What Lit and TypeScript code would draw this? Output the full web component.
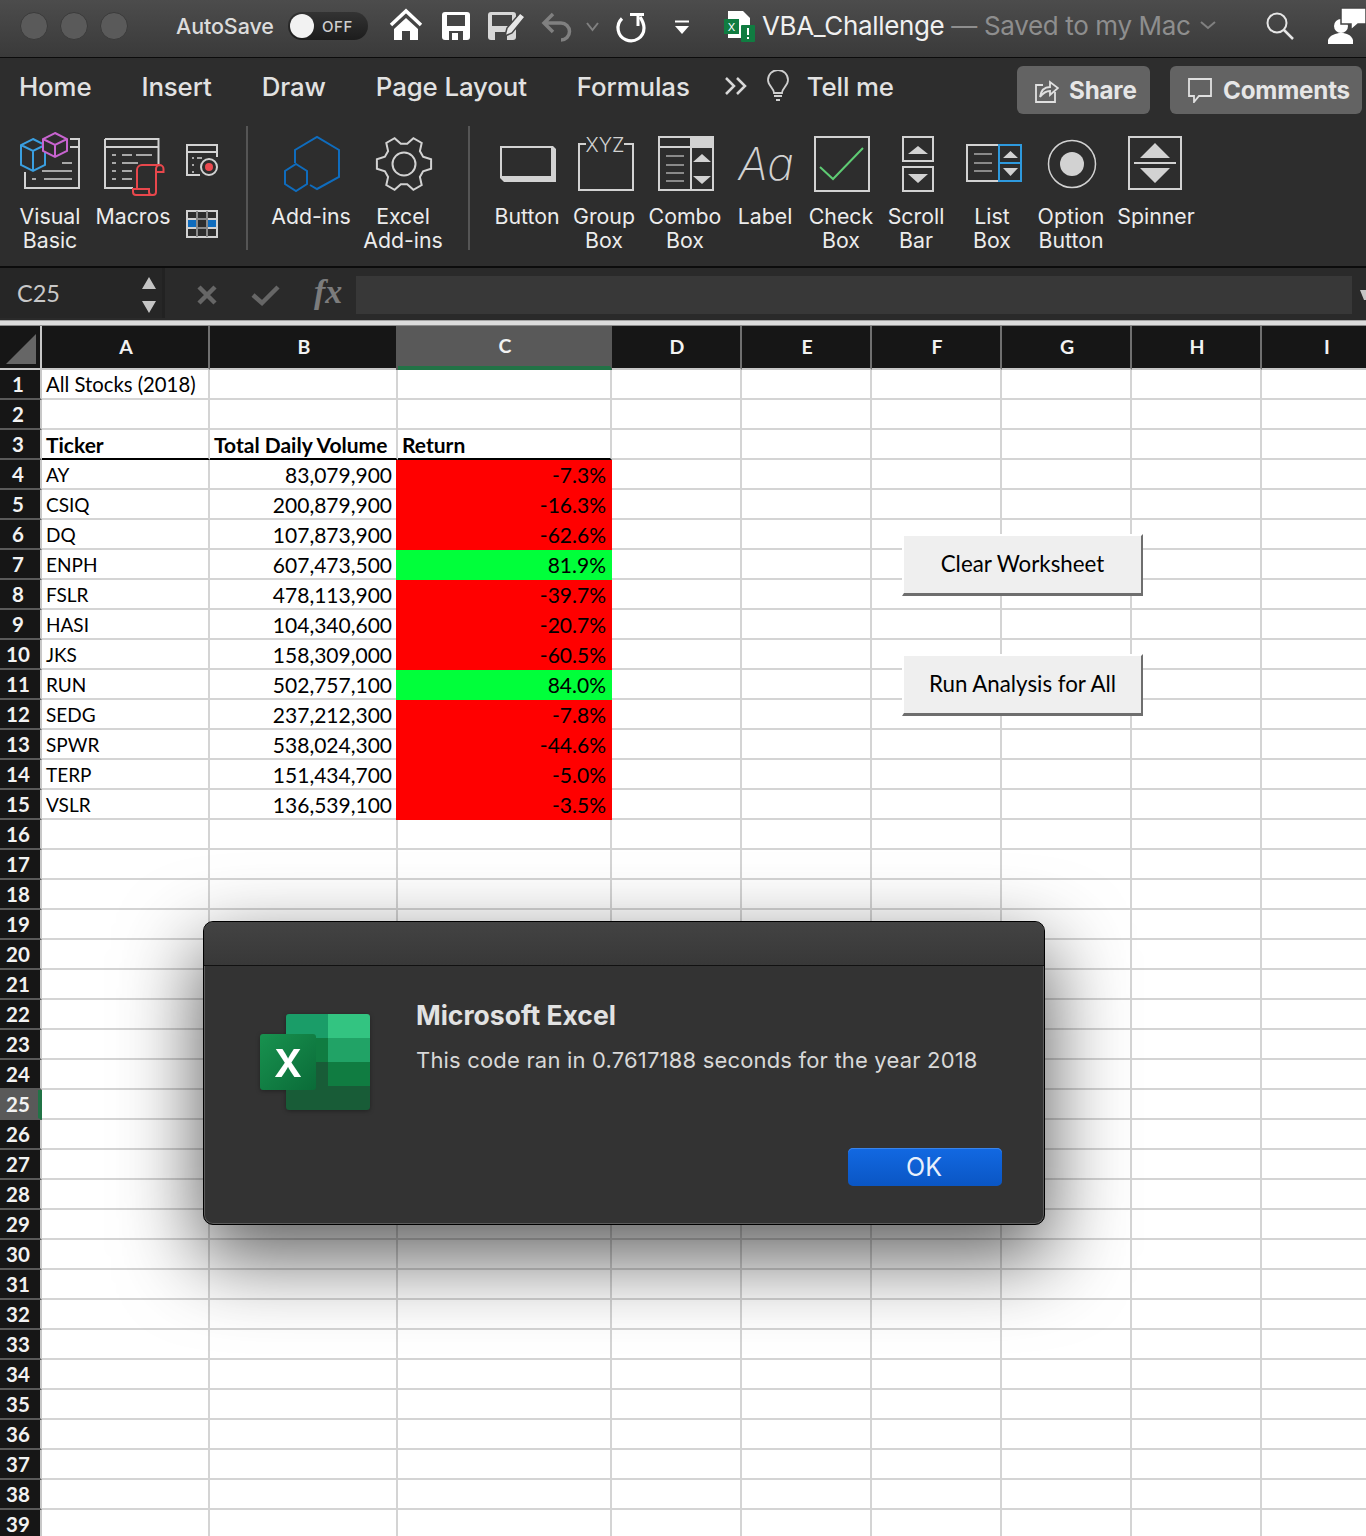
import { LitElement, html, css, svg, TemplateResult } from "lit";
import { customElement } from "lit/decorators.js";

interface RibbonItem {
  label: string[];
  width: number;
  box: [number, number];
  icon: TemplateResult;
}

interface StockRow {
  ticker: string;
  volume: string;
  change: string;
}

const STOCKS: StockRow[] = [
  { ticker: "AY", volume: "83,079,900", change: "-7.3%" },
  { ticker: "CSIQ", volume: "200,879,900", change: "-16.3%" },
  { ticker: "DQ", volume: "107,873,900", change: "-62.6%" },
  { ticker: "ENPH", volume: "607,473,500", change: "81.9%" },
  { ticker: "FSLR", volume: "478,113,900", change: "-39.7%" },
  { ticker: "HASI", volume: "104,340,600", change: "-20.7%" },
  { ticker: "JKS", volume: "158,309,000", change: "-60.5%" },
  { ticker: "RUN", volume: "502,757,100", change: "84.0%" },
  { ticker: "SEDG", volume: "237,212,300", change: "-7.8%" },
  { ticker: "SPWR", volume: "538,024,300", change: "-44.6%" },
  { ticker: "TERP", volume: "151,434,700", change: "-5.0%" },
  { ticker: "VSLR", volume: "136,539,100", change: "-3.5%" },
];

const COLUMNS = ["A", "B", "C", "D", "E", "F", "G", "H", "I"];
const ROW_COUNT = 39;
const SELECTED_ROW = 25;

const LIGHT = "#d2d2d2";
const GREY = "#8a8a8a";

function gearPoints(cx: number, cy: number): string {
  const pts: string[] = [];
  for (let i = 0; i < 6; i++) {
    const a = (i * 60 * Math.PI) / 180;
    const at = (r: number, d: number) => {
      const t = a + (d * Math.PI) / 180;
      return `${(cx + r * Math.cos(t)).toFixed(1)},${(cy + r * Math.sin(t)).toFixed(1)}`;
    };
    pts.push(at(20.5, -21), at(27.5, -10), at(27.5, 10), at(20.5, 21));
  }
  return pts.join(" ");
}

// all ribbon icons are drawn in page coordinates, the viewBox does the offset
const ICON_VB = svg`
  <path d="M70 139H79V188H25V172M70 147H79" fill="none" stroke="${LIGHT}" stroke-width="2"/>
  <path d="M62 163H72M42 171H72M32 179H36M44 179H72" stroke="#a8a8a8" stroke-width="2"/>
  <path d="M33 139L45 145V165L33 171L21 165V145ZM21 145L33 151L45 145M33 151V171" fill="#2d2d2d" stroke="#3a9fe0" stroke-width="2"/>
  <path d="M55 133L67 139V151L55 157L43 151V139ZM43 139L55 145L67 139M55 145V157" fill="#2d2d2d" stroke="#c864d0" stroke-width="2"/>
`;

const ICON_MACROS = svg`
  <path d="M105 139H158.500V164M105 139V188H133M105 147H158.500" fill="none" stroke="${LIGHT}" stroke-width="2"/>
  <path d="M112 155H116M122 155H132M136 155H152M112 163H116M122 163H138M112 171H116M122 171H132M112 179H116M122 179H132" stroke="#a8a8a8" stroke-width="2"/>
  <path d="M157 172H163.500V169A4 4 0 0 0 159.500 165H142A5 5 0 0 0 137 170V189H133V192A3 3 0 0 0 136 195H153A3 3 0 0 0 156 192V169A4 4 0 0 1 160 165M133 189H149V192A3 3 0 0 0 152 195" fill="#2d2d2d" stroke="#e8474c" stroke-width="2"/>
`;

const ICON_ADDINS = svg`
  <path d="M295 163V150L317 137L339 150V177L317 189L310 185" fill="none" stroke="#0f6cbd" stroke-width="2"/>
  <path d="M296 164L307 171V184L296 191L285 184V171Z" fill="none" stroke="#0f6cbd" stroke-width="2"/>
`;

const ICON_GEAR = svg`
  <polygon points="${gearPoints(404, 164)}" fill="none" stroke="${LIGHT}" stroke-width="2"/>
  <circle cx="404" cy="164" r="11.500" fill="none" stroke="${LIGHT}" stroke-width="2"/>
`;

const ICON_BUTTON = svg`
  <path d="M500 146H553L556 149V182H504L500 178Z" fill="${LIGHT}"/>
  <rect x="502" y="148" width="49" height="28" fill="#2d2d2d"/>
`;

const ICON_GROUP = svg`
  <path d="M586 144H579V190H633V144H624" fill="none" stroke="${LIGHT}" stroke-width="2"/>
  <text x="605" y="152" text-anchor="middle" class="svg-xyz">XYZ</text>
`;

const ICON_COMBO = svg`
  <rect x="659" y="137" width="54" height="53" fill="none" stroke="${LIGHT}" stroke-width="2"/>
  <rect x="690" y="136" width="24" height="12" fill="${LIGHT}"/>
  <path d="M659 147H690M691 147V190" stroke="${LIGHT}" stroke-width="2"/>
  <path d="M666 156H684M666 165H684M666 173H684M666 181H684" stroke="${GREY}" stroke-width="2"/>
  <path d="M702 154L711 162H693ZM693 176H711L702 184Z" fill="${LIGHT}"/>
`;

const ICON_LABEL = svg`<text x="766" y="180" text-anchor="middle" class="svg-aa">Aa</text>`;

const ICON_CHECK = svg`
  <rect x="815" y="137" width="54" height="54" fill="none" stroke="${LIGHT}" stroke-width="2"/>
  <path d="M820 167L833 179L863 148" fill="none" stroke="#5ecb73" stroke-width="2"/>
`;

const ICON_SCROLL = svg`
  <rect x="903" y="137" width="30" height="24" fill="none" stroke="${LIGHT}" stroke-width="2"/>
  <rect x="903" y="167" width="30" height="24" fill="none" stroke="${LIGHT}" stroke-width="2"/>
  <path d="M918 146L928 154H908ZM908 174H928L918 183Z" fill="${LIGHT}"/>
`;

const ICON_LIST = svg`
  <path d="M999 145H967V181H999" fill="none" stroke="${LIGHT}" stroke-width="2"/>
  <path d="M974 154H992M974 163H992M974 171H992" stroke="${GREY}" stroke-width="2"/>
  <rect x="999" y="145" width="22" height="36" fill="none" stroke="#2e9ade" stroke-width="2"/>
  <path d="M999 163H1021" stroke="#2e9ade" stroke-width="2"/>
  <path d="M1010.500 151L1018 158H1003ZM1003 168H1018L1010.500 176Z" fill="${LIGHT}"/>
`;

const ICON_OPTION = svg`
  <circle cx="1072" cy="164" r="23.500" fill="none" stroke="${LIGHT}" stroke-width="1.500"/>
  <circle cx="1072" cy="164" r="12" fill="${LIGHT}"/>
`;

const ICON_SPINNER = svg`
  <rect x="1129" y="137" width="52" height="52" fill="none" stroke="${LIGHT}" stroke-width="2"/>
  <path d="M1155 143L1170 158H1140ZM1140 168H1170L1155 183Z" fill="${LIGHT}"/>
  <path d="M1134 163H1176" stroke="${LIGHT}" stroke-width="2"/>
`;

const GROUP_ONE: RibbonItem[] = [
  { label: ["Visual", "Basic"], width: 72, box: [14, 72], icon: html`${ICON_VB}` },
  { label: ["Macros"], width: 94, box: [86, 94], icon: html`${ICON_MACROS}` },
];

const GROUP_TWO: RibbonItem[] = [
  { label: ["Add-ins"], width: 92, box: [265, 92], icon: html`${ICON_ADDINS}` },
  { label: ["Excel", "Add-ins"], width: 92, box: [357, 92], icon: html`${ICON_GEAR}` },
];

const GROUP_THREE: RibbonItem[] = [
  { label: ["Button"], width: 76, box: [489, 76], icon: html`${ICON_BUTTON}` },
  { label: ["Group", "Box"], width: 78, box: [565, 78], icon: html`${ICON_GROUP}` },
  { label: ["Combo", "Box"], width: 84, box: [643, 84], icon: html`${ICON_COMBO}` },
  { label: ["Label"], width: 76, box: [727, 76], icon: html`${ICON_LABEL}` },
  { label: ["Check", "Box"], width: 76, box: [803, 76], icon: html`${ICON_CHECK}` },
  { label: ["Scroll", "Bar"], width: 74, box: [879, 74], icon: html`${ICON_SCROLL}` },
  { label: ["List", "Box"], width: 78, box: [953, 78], icon: html`${ICON_LIST}` },
  { label: ["Option", "Button"], width: 80, box: [1031, 80], icon: html`${ICON_OPTION}` },
  { label: ["Spinner"], width: 90, box: [1111, 90], icon: html`${ICON_SPINNER}` },
];

@customElement("app-root")
export class AppRoot extends LitElement {
  static styles = css`
    :host {
      display: block;
      position: relative;
      width: 1366px;
      height: 1536px;
      overflow: hidden;
      background: #fff;
      font-family: Inter, "Liberation Sans", sans-serif;
    }

    svg {
      display: block;
      flex: none;
    }

    .svg-xyz {
      font: 300 20px Inter, sans-serif;
      fill: #d2d2d2;
    }

    .svg-aa {
      font: italic 200 45px Inter, sans-serif;
      fill: #d2d2d2;
    }

    /* title bar */
    .titlebar {
      height: 52px;
      padding-bottom: 5px;
      background: linear-gradient(#4c4c4c, #3a3a3a);
      border-bottom: 1px solid #0c0c0c;
      display: flex;
      align-items: center;
      position: relative;
    }

    .lights {
      display: flex;
      gap: 12px;
      padding-left: 20px;
    }

    .light {
      width: 26px;
      height: 26px;
      border-radius: 50%;
      background: #5a5a5a;
      border: 1px solid #3a3a3a;
    }

    .autosave {
      margin-left: 48px;
      font-size: 21.500px;
      font-weight: 500;
      color: #dcdcdc;
      width: 112px;
      letter-spacing: -0.1px;
    }

    .toggle {
      width: 80px;
      height: 28px;
      border-radius: 14px;
      background: linear-gradient(#333, #1c1c1c);
      display: flex;
      align-items: center;
      gap: 8px;
      font-size: 15px;
      font-weight: 500;
      letter-spacing: 0.6px;
      color: #cfcfcf;
    }

    .knob {
      width: 24px;
      height: 24px;
      margin-left: 2px;
      border-radius: 50%;
      background: #f2f2f2;
    }

    .doc-name {
      position: absolute;
      left: 762px;
      top: 10px;
      font-size: 26px;
      color: #f0f0f0;
      letter-spacing: -0.35px;
      white-space: nowrap;
    }

    .doc-name span {
      color: #8e8e8e;
    }

    .title-icons {
      position: absolute;
      left: 0;
      top: 0;
    }

    /* tabs */
    .tabs {
      height: 56px;
      padding: 0 4px 6px 19px;
      background: #2d2d2d;
      display: flex;
      align-items: center;
      font-size: 25.800px;
      font-weight: 500;
      color: #e2e2e2;
      letter-spacing: -0.1px;
    }

    .tab {
      margin-right: 50px;
      white-space: nowrap;
    }

    .tab.last {
      margin-right: 34px;
    }

    .bulb {
      margin-left: 18px;
    }

    .tell {
      margin-left: 17px;
      white-space: nowrap;
    }

    .share {
      margin-left: auto;
      display: flex;
      gap: 20px;
      align-self: flex-start;
      padding-top: 8px;
    }

    .share-btn {
      height: 48px;
      border-radius: 6px;
      background: #636363;
      display: flex;
      align-items: center;
      gap: 10px;
      font-weight: 700;
      font-size: 24.200px;
      letter-spacing: -0.2px;
      color: #e6e6e6;
      box-sizing: border-box;
    }

    .share-btn.a {
      width: 133px;
      padding-left: 17px;
    }

    .share-btn.b {
      width: 192px;
      padding-left: 17px;
    }

    /* ribbon */
    .ribbon {
      height: 146px;
      background: #2d2d2d;
      border-bottom: 2px solid #0c0c0c;
      display: flex;
      align-items: flex-start;
      padding-left: 14px;
    }

    .item {
      flex: none;
      padding-top: 11px;
      display: flex;
      flex-direction: column;
      align-items: center;
    }

    .icon-slot {
      height: 66px;
      position: relative;
      width: 100%;
      display: flex;
      justify-content: center;
    }

    .item-label {
      margin-top: 7px;
      font-size: 21.300px;
      line-height: 24px;
      color: #ececec;
      text-align: center;
      white-space: nowrap;
    }

    .small-icons {
      flex: none;
      width: 44px;
      padding-top: 11px;
      display: flex;
      justify-content: center;
    }

    .sep {
      flex: none;
      width: 2px;
      height: 124px;
      margin-top: 6px;
      background: #555;
    }

    .sep.one {
      margin: 6px 17px 0 22px;
    }

    .sep.two {
      margin: 6px 19px 0 19px;
    }

    /* formula bar */
    .formula {
      height: 52px;
      background: #2a2a2a;
      display: flex;
      position: relative;
    }

    .namebox {
      width: 165px;
      height: 50px;
      background: #262626;
      display: flex;
      align-items: center;
      padding-left: 17px;
      box-sizing: border-box;
      font: 400 23.500px Lato, sans-serif;
      color: #c8c8c8;
      border-right: 3px solid #222;
    }

    .fx {
      position: absolute;
      left: 314px;
      top: 5px;
      font: italic 700 34px "Liberation Serif", serif;
      color: #7c7c7c;
    }

    .input {
      position: absolute;
      left: 356px;
      right: 14px;
      top: 8px;
      height: 38px;
      background: #383838;
    }

    .divider {
      height: 4px;
      background: #dcdcdc;
      border-top: 1px solid #a4a4a4;
      border-bottom: 1px solid #8c8c8c;
    }

    /* sheet */
    .sheet {
      display: grid;
      grid-template-columns: 42px 168px 188px 214px repeat(6, 130px);
      grid-template-rows: 44px;
      grid-auto-rows: 30px;
      font: 400 21px Lato, sans-serif;
      color: #000;
      width: 1432px;
    }

    .c {
      box-sizing: border-box;
      border-right: 2px solid #d4d4d4;
      border-bottom: 2px solid #d4d4d4;
      display: flex;
      align-items: center;
      padding: 0 4px;
      white-space: nowrap;
      min-width: 0;
    }

    .c.title {
      font-size: 20.300px;
    }

    .c.ticker {
      font-size: 19px;
    }

    .c.num {
      justify-content: flex-end;
    }

    .c.bold {
      font-weight: 700;
      border-bottom-color: #000;
    }

    .c.bad,
    .c.good {
      justify-content: flex-end;
      border-color: transparent;
    }

    .c.bad {
      background: #ff0000;
      box-shadow: -2px 0 0 #ff0000;
    }

    .c.good {
      background: #00ff3a;
      box-shadow: -2px 0 0 #00ff3a;
    }

    .corner {
      width: 42px;
      height: 44px;
      background: #161616;
      border-right: 2px solid #c8c8c8;
      border-bottom: 2px solid #c8c8c8;
      box-sizing: border-box;
    }

    .ch {
      box-sizing: border-box;
      background: #161616;
      color: #f2f2f2;
      border-right: 2px solid #707070;
      border-bottom: 2px solid #c8c8c8;
      display: flex;
      align-items: center;
      justify-content: center;
      font: 700 19.500px Lato, sans-serif;
      padding: 0 0 2px 2px;
    }

    .ch.sel {
      background: #595959;
      border-right-color: #595959;
      border-bottom: 4px solid #217346;
      box-shadow: -2px 0 0 #595959;
    }

    .rh {
      box-sizing: border-box;
      background: #161616;
      color: #f2f2f2;
      border-right: 2px solid #c8c8c8;
      border-bottom: 2px solid #5a5a5a;
      display: flex;
      align-items: center;
      justify-content: center;
      font: 700 20.500px Lato, sans-serif;
      padding-right: 4px;
    }

    .rh.sel {
      background: #595959;
      border-right: 4px solid #217346;
      border-bottom-color: #595959;
      padding-right: 2px;
    }

    /* buttons floating on the sheet */
    .sheet-btn {
      position: absolute;
      left: 902px;
      width: 241px;
      height: 62px;
      box-sizing: border-box;
      background: #efefef;
      border-style: solid;
      border-width: 2px 2px 3px 2px;
      border-color: #fff #6e6e6e #6e6e6e #fff;
      display: flex;
      align-items: center;
      justify-content: center;
      padding-bottom: 3px;
      font: 400 22.300px Lato, sans-serif;
      color: #000;
    }

    .sheet-btn.one {
      top: 534px;
    }

    .sheet-btn.two {
      top: 654px;
    }

    /* alert */
    .dialog {
      position: absolute;
      left: 203px;
      top: 921px;
      width: 842px;
      height: 304px;
      box-sizing: border-box;
      border: 1px solid #000;
      border-radius: 10px;
      background: #333;
      box-shadow: inset 0 0 0 1px #5c5c5c, 0 30px 80px 4px rgba(0, 0, 0, 0.62);
      display: flex;
      flex-direction: column;
    }

    .dialog-title {
      height: 43px;
      flex: none;
      background: linear-gradient(#434343, #383838);
      border-bottom: 1px solid #111;
      border-radius: 9px 9px 0 0;
    }

    .dialog-body {
      flex: 1;
      position: relative;
      display: flex;
      padding: 48px 0 0 56px;
    }

    .logo {
      flex: none;
      width: 110px;
      height: 96px;
      filter: drop-shadow(0 1px 2px rgba(0, 0, 0, 0.35));
    }

    .dialog-text {
      margin-left: 47px;
      margin-top: -14px;
    }

    .dialog-head {
      font-size: 26.500px;
      font-weight: 700;
      color: #e2e2e2;
      line-height: 32px;
      margin-left: -1px;
      margin-top: -1px;
    }

    .dialog-msg {
      margin-top: 15px;
      margin-left: -1px;
      font-size: 22px;
      color: #d8d8d8;
      line-height: 28px;
      white-space: nowrap;
      letter-spacing: 0.18px;
    }

    .ok {
      position: absolute;
      left: 644px;
      top: 182px;
      width: 154px;
      height: 38px;
      box-sizing: border-box;
      padding-right: 2px;
      border-radius: 5px;
      background: linear-gradient(#1269e2, #0a56c4);
      box-shadow: inset 0 1px 0 #3a84ea;
      color: #e8f0fc;
      font-size: 25px;
      display: flex;
      align-items: center;
      justify-content: center;
    }
  `;

  private renderTitleIcons(): TemplateResult {
    return html`
      <svg class="title-icons" width="1366" height="57" viewBox="0 0 1366 57">
        <!-- home -->
        <path d="M391 25L406 11L421 25" fill="none" stroke="#fff" stroke-width="3.500"/>
        <path d="M406 18L418 29V40H410V31H402V40H394V29Z" fill="#fff"/>
        <!-- save -->
        <rect x="442" y="12" width="28" height="28" rx="3" fill="#fff"/>
        <rect x="447" y="15" width="18" height="11" fill="#454545"/>
        <rect x="449" y="31" width="14" height="9" fill="#454545"/>
        <rect x="452" y="33" width="6" height="7" fill="#fff"/>
        <!-- save as -->
        <rect x="488" y="12" width="28" height="28" rx="3" fill="#d8d8d8"/>
        <rect x="492" y="15" width="20" height="11" fill="#454545"/>
        <rect x="495" y="32" width="12" height="8" fill="#454545"/>
        <path d="M505 36L507 28L520 13L525 17L512 33Z" fill="#e8e8e8" stroke="#454545" stroke-width="1.500"/>
        <!-- undo -->
        <path d="M553 14L544 23L553 32M544 23H561A8.500 8.500 0 0 1 561 40" fill="none" stroke="#808080" stroke-width="3.500"/>
        <path d="M587 23L592.500 30L598 23" fill="none" stroke="#808080" stroke-width="2"/>
        <!-- redo -->
        <path d="M622 18.500A13 13 0 1 0 644 28C644 24 642 20 640 17" fill="none" stroke="#fff" stroke-width="3.200"/>
        <path d="M630 14.500H644M638 14V26" fill="none" stroke="#fff" stroke-width="3"/>
        <!-- customize -->
        <path d="M675 21.500H689" stroke="#fff" stroke-width="2"/>
        <path d="M675 26H689L682 34Z" fill="#fff"/>
        <!-- file -->
        <path d="M728 11H743L750 18V38H728Z" fill="#fff"/>
        <rect x="724" y="19" width="15" height="15" fill="#107c41"/>
        <text x="731.500" y="31" text-anchor="middle" fill="#fff" font-size="11" font-family="Inter, sans-serif">X</text>
        <rect x="741" y="25" width="14" height="17" rx="1" fill="#107c41"/>
        <path d="M748 28V35M748 37V39" stroke="#fff" stroke-width="2"/>
        <!-- doc chevron -->
        <path d="M1201 22L1208 28L1215 22" fill="none" stroke="#808080" stroke-width="2"/>
        <!-- search -->
        <circle cx="1277" cy="23" r="9.500" fill="none" stroke="#e6e6e6" stroke-width="2"/>
        <path d="M1284 30L1293 39" stroke="#e6e6e6" stroke-width="2.500"/>
        <!-- person with bubble -->
        <circle cx="1341" cy="26" r="7" fill="#fff"/>
        <path d="M1328 44V40C1330 35 1336 33 1341 33C1347 33 1351 35 1353 40V44Z" fill="#fff"/>
        <path d="M1341 8H1366V24H1358L1351 30V24H1341Z" fill="#fff" stroke="#444" stroke-width="1.500"/>
      </svg>
    `;
  }

  private renderIcon(item: RibbonItem): TemplateResult {
    const left = item.box[0];
    const w = item.box[1];
    return html`
      <svg width=${w} height="66" viewBox="${left} 131 ${w} 66">${item.icon}</svg>
    `;
  }

  private renderItem(item: RibbonItem): TemplateResult {
    return html`
      <div class="item" style="width:${item.width}px">
        <div class="icon-slot">${this.renderIcon(item)}</div>
        <div class="item-label">${item.label.map((l) => html`<div>${l}</div>`)}</div>
      </div>
    `;
  }

  private renderSmallIcons(): TemplateResult {
    return html`
      <div class="small-icons">
        <svg width="44" height="120" viewBox="180 131 44 120">
          <path d="M200 175H187V145H217V157M187 152H217" fill="none" stroke="${LIGHT}" stroke-width="2"/>
          <path d="M192 158H194M197 158H202M192 165H194M192 172H194" stroke="#a8a8a8" stroke-width="2"/>
          <circle cx="209" cy="167" r="8" fill="#2d2d2d" stroke="${LIGHT}" stroke-width="2"/>
          <circle cx="209" cy="167" r="4" fill="#ec4a50"/>
          <rect x="187" y="219" width="10" height="9" fill="#0f6cbd"/>
          <rect x="207" y="219" width="10" height="9" fill="#0f6cbd"/>
          <rect x="187" y="211" width="30" height="26" fill="none" stroke="${LIGHT}" stroke-width="2"/>
          <path d="M187 219H197M207 219H217M187 228H197M207 228H217" stroke="${LIGHT}" stroke-width="2"/>
          <path d="M197 211V237M207 211V237M197 219H207M197 228H207" stroke="#8a8a8a" stroke-width="2"/>
        </svg>
      </div>
    `;
  }

  private renderFormula(): TemplateResult {
    return html`
      <div class="formula">
        <div class="namebox">C25</div>
        <svg class="title-icons" width="1366" height="52" viewBox="0 268 1366 52">
          <path d="M149 277L156 289H142ZM142 301H156L149 313Z" fill="#c4c4c4"/>
          <path d="M199 287L215 303M215 287L199 303" stroke="#666" stroke-width="4.500"/>
          <path d="M253 295L262 303L278 287" fill="none" stroke="#666" stroke-width="4.500"/>
          <path d="M1360 290H1366V300H1364Z" fill="#c4c4c4"/>
        </svg>
        <span class="fx">fx</span>
        <div class="input"></div>
      </div>
      <div class="divider"></div>
    `;
  }

  private renderCells(row: number): TemplateResult[] {
    const blanks = (n: number) => Array.from({ length: n }, () => html`<div class="c"></div>`);
    if (row === 1) {
      return [html`<div class="c title">All Stocks (2018)</div>`, ...blanks(8)];
    }
    if (row === 3) {
      return [
        html`<div class="c bold">Ticker</div>`,
        html`<div class="c bold">Total Daily Volume</div>`,
        html`<div class="c bold">Return</div>`,
        ...blanks(6),
      ];
    }
    const stock = STOCKS[row - 4];
    if (stock) {
      const tone = stock.change.startsWith("-") ? "bad" : "good";
      return [
        html`<div class="c ticker">${stock.ticker}</div>`,
        html`<div class="c num">${stock.volume}</div>`,
        html`<div class="c ${tone}">${stock.change}</div>`,
        ...blanks(6),
      ];
    }
    return blanks(9);
  }

  private renderSheet(): TemplateResult {
    const rows = Array.from({ length: ROW_COUNT }, (_, i) => i + 1);
    return html`
      <div class="sheet">
        <svg class="corner" viewBox="0 0 40 42">
          <path d="M6 38L36 8V38Z" fill="#666"/>
        </svg>
        ${COLUMNS.map((c) => html`<div class="ch ${c === "C" ? "sel" : ""}">${c}</div>`)}
        ${rows.map(
          (r) => html`
            <div class="rh ${r === SELECTED_ROW ? "sel" : ""}">${r}</div>
            ${this.renderCells(r)}
          `
        )}
      </div>
    `;
  }

  private renderLogo(): TemplateResult {
    return html`
      <svg class="logo" width="110" height="96" viewBox="0 0 110 96">
        <defs>
          <linearGradient id="xg" x1="0" y1="0" x2="1" y2="1">
            <stop offset="0" stop-color="#18924f"/>
            <stop offset="1" stop-color="#0a6b38"/>
          </linearGradient>
          <clipPath id="sq"><rect x="26" y="0" width="84" height="96" rx="3"/></clipPath>
        </defs>
        <g clip-path="url(#sq)">
          <rect x="26" y="0" width="42" height="48" fill="#1a9d68"/>
          <rect x="68" y="0" width="42" height="24" fill="#33c481"/>
          <rect x="68" y="24" width="42" height="24" fill="#21a366"/>
          <rect x="26" y="24" width="42" height="24" fill="#107c41"/>
          <rect x="26" y="48" width="84" height="48" fill="#185c37"/>
          <rect x="68" y="48" width="42" height="24" fill="#107c41"/>
        </g>
        <rect x="0" y="20" width="56" height="56" rx="3" fill="url(#xg)"/>
        <text x="28" y="63" text-anchor="middle" fill="#fff" font-size="38" font-weight="700" font-family="Inter, sans-serif">X</text>
      </svg>
    `;
  }

  protected render(): TemplateResult {
    return html`
      <div class="titlebar">
        <div class="lights">
          <div class="light"></div>
          <div class="light"></div>
          <div class="light"></div>
        </div>
        <div class="autosave">AutoSave</div>
        <div class="toggle"><div class="knob"></div>OFF</div>
        ${this.renderTitleIcons()}
        <div class="doc-name">VBA_Challenge <span>— Saved to my Mac</span></div>
      </div>

      <div class="tabs">
        <div class="tab">Home</div>
        <div class="tab">Insert</div>
        <div class="tab">Draw</div>
        <div class="tab">Page Layout</div>
        <div class="tab last">Formulas</div>
        <svg width="24" height="20" viewBox="0 0 24 20">
          <path d="M2 2L10 10L2 18M13 2L21 10L13 18" fill="none" stroke="#d8d8d8" stroke-width="2.500"/>
        </svg>
        <svg class="bulb" width="24" height="32" viewBox="0 0 24 32">
          <path d="M8 23C8 18 2 16 2 10A10 10 0 0 1 22 10C22 16 16 18 16 23ZM8 26H16M10 30H14" fill="none" stroke="#cfcfcf" stroke-width="1.800"/>
        </svg>
        <div class="tell">Tell me</div>
        <div class="share">
          <div class="share-btn a">
            <svg width="25" height="26" viewBox="0 0 25 26">
              <path d="M9 8H2V25H21V15" fill="none" stroke="#e0e0e0" stroke-width="1.800"/>
              <path d="M6 20C7 13 11 10 16 10V5L24 11L16 18V14C12 14 9 16 6 20Z" fill="none" stroke="#e0e0e0" stroke-width="1.800"/>
            </svg>
            Share
          </div>
          <div class="share-btn b">
            <svg width="26" height="26" viewBox="0 0 26 26">
              <path d="M2 2H24V19H12L7 25V19H2Z" fill="none" stroke="#e0e0e0" stroke-width="1.800"/>
            </svg>
            Comments
          </div>
        </div>
      </div>

      <div class="ribbon">
        ${GROUP_ONE.map((i) => this.renderItem(i))}
        ${this.renderSmallIcons()}
        <div class="sep one"></div>
        ${GROUP_TWO.map((i) => this.renderItem(i))}
        <div class="sep two"></div>
        ${GROUP_THREE.map((i) => this.renderItem(i))}
      </div>

      ${this.renderFormula()}
      ${this.renderSheet()}

      <div class="sheet-btn one">Clear Worksheet</div>
      <div class="sheet-btn two">Run Analysis for All</div>

      <div class="dialog">
        <div class="dialog-title"></div>
        <div class="dialog-body">
          ${this.renderLogo()}
          <div class="dialog-text">
            <div class="dialog-head">Microsoft Excel</div>
            <div class="dialog-msg">This code ran in 0.7617188 seconds for the year 2018</div>
          </div>
          <div class="ok">OK</div>
        </div>
      </div>
    `;
  }
}
